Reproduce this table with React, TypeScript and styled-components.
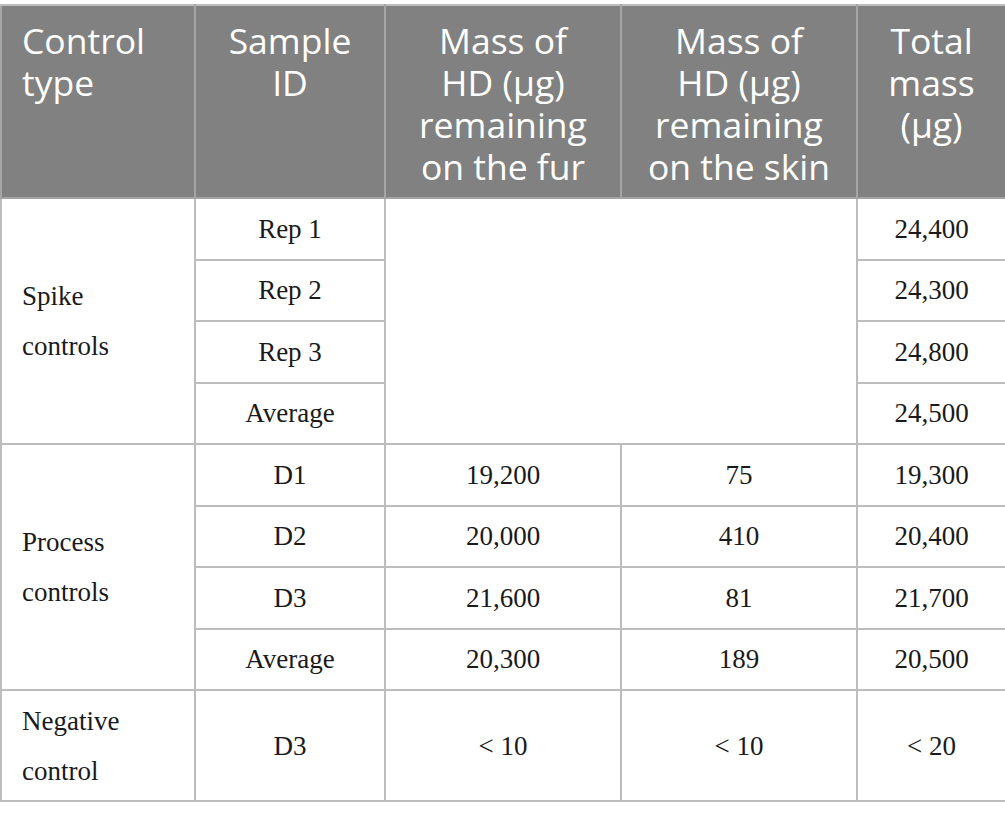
import React from "react";
import styled, { createGlobalStyle } from "styled-components";

const GlobalStyle = createGlobalStyle`
  html, body { margin: 0; padding: 0; background: #ffffff; }
  body { width: 1005px; height: 819px; overflow: hidden; }
`;

const Page = styled.div`
  padding-top: 4px;
`;

const Table = styled.table`
  width: 1005px;
  border-collapse: collapse;
  table-layout: fixed;
  border: 2px solid #bdbdbd;
`;

const Head = styled.th<{ $align?: "left" | "center" }>`
  background: #808180;
  color: #ffffff;
  font-family: "Open Sans", "DejaVu Sans", sans-serif;
  font-weight: 400;
  font-size: 35.5px;
  line-height: 42px;
  text-align: ${(p) => p.$align ?? "center"};
  vertical-align: top;
  padding: 13px ${(p) => (p.$align === "left" ? "20px" : "6px")} 0;
  height: 178px;
  border: 2px solid #a4a5a4;
  border-top-color: #bdbdbd;
`;

const Cell = styled.td<{ $align?: "left" | "center"; $h?: number }>`
  font-family: "Liberation Serif", "Times New Roman", serif;
  font-size: 27px;
  line-height: 50px;
  color: #1a1a1a;
  text-align: ${(p) => p.$align ?? "center"};
  vertical-align: middle;
  padding: 0 ${(p) => (p.$align === "left" ? "20px" : "8px")};
  height: ${(p) => p.$h ?? 59.5}px;
  border: 2px solid #bdbdbd;
`;

const Label = styled(Cell).attrs({ $align: "left" as const })``;

type Row = [string, string, string, string];

const spike: [string, string][] = [
  ["Rep 1", "24,400"],
  ["Rep 2", "24,300"],
  ["Rep 3", "24,800"],
  ["Average", "24,500"],
];

const process: Row[] = [
  ["D1", "19,200", "75", "19,300"],
  ["D2", "20,000", "410", "20,400"],
  ["D3", "21,600", "81", "21,700"],
  ["Average", "20,300", "189", "20,500"],
];

export default function App() {
  return (
    <Page>
      <GlobalStyle />
      <Table>
        <colgroup>
          <col style={{ width: 194 }} />
          <col style={{ width: 190 }} />
          <col style={{ width: 236 }} />
          <col style={{ width: 236 }} />
          <col style={{ width: 149 }} />
        </colgroup>
        <thead>
          <tr>
            <Head $align="left">Control<br />type</Head>
            <Head>Sample<br />ID</Head>
            <Head>Mass of<br />HD (μg)<br />remaining<br />on the fur</Head>
            <Head>Mass of<br />HD (μg)<br />remaining<br />on the skin</Head>
            <Head>Total<br />mass<br />(μg)</Head>
          </tr>
        </thead>
        <tbody>
          {spike.map(([id, total], i) => (
            <tr key={id}>
              {i === 0 && <Label rowSpan={4}>Spike<br />controls</Label>}
              <Cell>{id}</Cell>
              {i === 0 && <Cell rowSpan={4} colSpan={2} />}
              <Cell>{total}</Cell>
            </tr>
          ))}
          {process.map(([id, fur, skin, total], i) => (
            <tr key={"p" + i}>
              {i === 0 && <Label rowSpan={4}>Process<br />controls</Label>}
              <Cell>{id}</Cell>
              <Cell>{fur}</Cell>
              <Cell>{skin}</Cell>
              <Cell>{total}</Cell>
            </tr>
          ))}
          <tr>
            <Label $h={109}>Negative<br />control</Label>
            <Cell $h={109}>D3</Cell>
            <Cell $h={109}>&lt; 10</Cell>
            <Cell $h={109}>&lt; 10</Cell>
            <Cell $h={109}>&lt; 20</Cell>
          </tr>
        </tbody>
      </Table>
    </Page>
  );
}
